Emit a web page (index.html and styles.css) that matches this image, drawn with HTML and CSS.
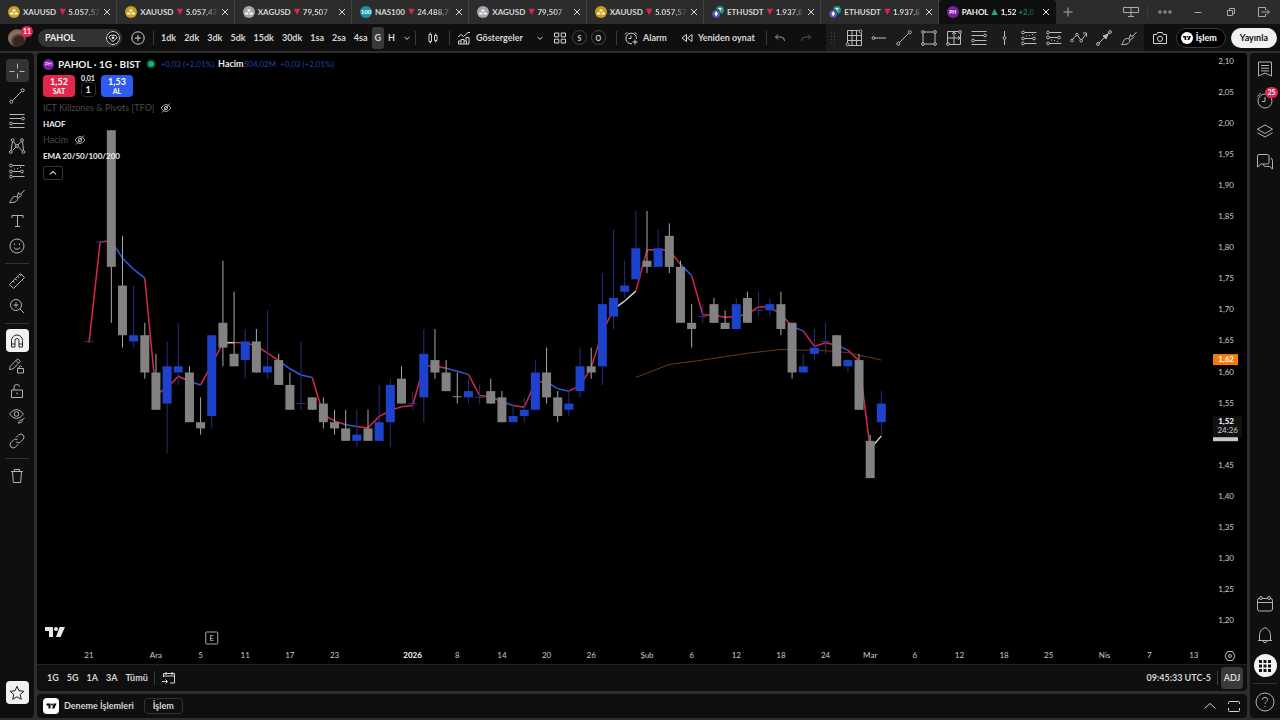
FILE: index.html
```html
<!DOCTYPE html>
<html lang="tr">
<head>
    <meta charset="UTF-8">
    <meta name="viewport" content="width=device-width, initial-scale=1.0">
    <title>PAHOL 1,52</title>
    <link rel="stylesheet" href="styles.css">
</head>
<body>
    <svg class="sprite" aria-hidden="true">
        <symbol id="gold" viewBox="0 0 12 12"><circle cx="6" cy="6" r="6" fill="#c9a01c"/><path d="M4.4 5.4l.5-2h2.2l.5 2zM1.9 8.4l.5-2h2.7l.5 2zM6.4 8.4l.5-2h2.7l.5 2z" fill="#fff"/></symbol>
        <symbol id="silver" viewBox="0 0 12 12"><circle cx="6" cy="6" r="6" fill="#a5a6ab"/><path d="M4.4 5.4l.5-2h2.2l.5 2zM1.9 8.4l.5-2h2.7l.5 2zM6.4 8.4l.5-2h2.7l.5 2z" fill="#fff"/></symbol>
        <symbol id="eth" viewBox="0 0 12 12"><circle cx="8" cy="4" r="4" fill="#1f9d83"/><path d="M6.3 2.6h3.4M8 2.6v3.6" stroke="#fff" fill="none"/><circle cx="4.4" cy="7.6" r="4.4" fill="#2d2d2d"/><circle cx="4.2" cy="7.8" r="3.9" fill="#4a5bb8"/><path d="M4.2 5l1.7 2.8-1.7 2.6-1.7-2.6z" fill="#fff"/></symbol>
        <symbol id="tv" viewBox="0 0 20 12"><path d="M0 1h8v10H4V5H0zM14.6 1H20l-4.400 10H11z"/><circle cx="11" cy="3" r="2"/></symbol>
        <symbol id="close" viewBox="0 0 12 12"><path d="M3 3l6 6M9 3l-6 6"/></symbol>
        <symbol id="plus" viewBox="0 0 12 12"><path d="M6 1.5v9M1.5 6h9"/></symbol>
        <symbol id="layout" viewBox="0 0 16 12"><path d="M.5 1.500h15v5H.5zM8 1.500v9M5 10.500h6"/></symbol>
        <symbol id="dots" viewBox="0 0 16 12"><circle cx="3" cy="6" r="1.200"/><circle cx="8" cy="6" r="1.200"/><circle cx="13" cy="6" r="1.200"/></symbol>
        <symbol id="minimize" viewBox="0 0 12 12"><path d="M2.500 6.500h7"/></symbol>
        <symbol id="restore" viewBox="0 0 12 12"><path d="M2.500 4.500h5v5h-5zM4.500 4.500v-2h5v5h-2"/></symbol>
        <symbol id="exit" viewBox="0 0 14 12"><path d="M8.500 4V1.500h-7v9h7V8M4.500 6h8M10 3.500L12.500 6 10 8.500"/></symbol>
        <symbol id="gem" viewBox="0 0 14 14"><circle cx="7" cy="7" r="6.500"/><path d="M4.500 4.200h5l1.700 2.400L7 10.600 2.800 6.600z"/><circle cx="7" cy="6.800" r="1" fill="currentColor"/></symbol>
        <symbol id="addc" viewBox="0 0 14 14"><circle cx="7" cy="7" r="6.200"/><path d="M7 3.800v6.400M3.800 7h6.400"/></symbol>
        <symbol id="down" viewBox="0 0 8 8"><path d="M1.500 3L4 5.300 6.500 3"/></symbol>
        <symbol id="up" viewBox="0 0 14 14"><path d="M1.500 9.500L7 4.500l5.500 5"/></symbol>
        <symbol id="candles" viewBox="0 0 12 14"><path d="M2 3.500h2.500v7H2zM7.500 4.500H10v5H7.500zM3.250 1.500v2M3.250 10.500v2M8.750 2.500v2M8.750 9.500v2"/></symbol>
        <symbol id="indicators" viewBox="0 0 14 14"><path d="M1 6l3-2.500 2.500 2L11 1.500h2M1.500 13V10H4V8.500h3V10h2V6.500h3V13zM4 10v3M7 10v3M9.500 10v3"/></symbol>
        <symbol id="grid4" viewBox="0 0 14 14"><path d="M1.500 2h4.300v3.800H1.500zM8.200 2h4.300v3.800H8.200zM1.500 8.200h4.300V12H1.500zM8.200 8.200h4.300V12H8.200z"/></symbol>
        <symbol id="alarm" viewBox="0 0 14 14"><path d="M8 12.700a5.300 5.300 0 1 1 4.500-5M1 3.500l2.300-2.300M10.700 1.200L13 3.500M7 4.500v3H4.500M11 8.500v5M8.500 11h5"/></symbol>
        <symbol id="replay" viewBox="0 0 12 12"><path d="M5.500 2.500v7L1 6zM11 2.500v7L6.500 6z"/></symbol>
        <symbol id="undo" viewBox="0 0 12 12"><path d="M4 2.500L1.500 5 4 7.500M1.500 5H7q3.500 0 3.500 4"/></symbol>
        <symbol id="redo" viewBox="0 0 12 12"><path d="M8 2.500L10.500 5 8 7.500M10.500 5H5Q1.500 5 1.500 9"/></symbol>
        <symbol id="handle" viewBox="0 0 8 14"><path d="M2 2h1M5 2h1M2 5.300h1M5 5.300h1M2 8.600h1M5 8.600h1M2 12h1M5 12h1"/></symbol>
        <symbol id="d-grid" viewBox="0 0 18 18"><path d="M2.500 1.500h11M16.500 4v12.500H4M2.500 1.500v12.500M7 1.500v15M11.500 1.500v15M2.500 6.500h14M2.500 11.500h14"/><circle cx="15.500" cy="2.300" r="1.400"/><circle cx="2.500" cy="15.500" r="1.400"/></symbol>
        <symbol id="d-ray" viewBox="0 0 18 18"><circle cx="3.500" cy="9" r="1.400"/><path d="M5 9h11"/></symbol>
        <symbol id="d-line" viewBox="0 0 18 18"><circle cx="3.300" cy="14.700" r="1.500"/><circle cx="14.700" cy="3.300" r="1.500"/><path d="M4.400 13.600l9.200-9.200"/></symbol>
        <symbol id="d-rect" viewBox="0 0 18 18"><path d="M4.500 3h9M4.500 15h9M3 4.500v9M15 4.500v9"/><circle cx="3" cy="3" r="1.400"/><circle cx="15" cy="3" r="1.400"/><circle cx="3" cy="15" r="1.400"/><circle cx="15" cy="15" r="1.400"/></symbol>
        <symbol id="d-range" viewBox="0 0 18 18"><path d="M2.500 2.500h11M15.500 4.500v11H5M2.500 2.500v11.500M9 3v12M3 9h12M7 5l2-2 2 2M13 7l2 2-2 2"/><circle cx="15" cy="3" r="1.400"/><circle cx="3" cy="15" r="1.400"/></symbol>
        <symbol id="d-fib" viewBox="0 0 18 18"><path d="M1.500 2.500h15M1.500 6.500h12M4.500 11.500h12M1.500 15.500h15"/><circle cx="15" cy="6.500" r="1.400"/><circle cx="3" cy="11.500" r="1.400"/></symbol>
        <symbol id="d-vline" viewBox="0 0 18 18"><circle cx="9.500" cy="9" r="1.400"/><path d="M9.500 2v5.500M9.500 10.500V16"/></symbol>
        <symbol id="d-long" viewBox="0 0 18 18"><path d="M4.500 3.500h12M4.500 9.500h8M4.500 14.500h12M6 7h1M9 6.500h1M12 5.500h1"/><circle cx="3" cy="3.500" r="1.400"/><circle cx="3" cy="9.500" r="1.400"/><circle cx="14" cy="9.500" r="1.400"/><circle cx="3" cy="14.500" r="1.400"/></symbol>
        <symbol id="d-short" viewBox="0 0 18 18"><path d="M4.500 3.500h12M4.500 8.500h8M4.500 14.500h12M6 11h1M9 11.500h1M12 12.500h1"/><circle cx="3" cy="3.500" r="1.400"/><circle cx="3" cy="8.500" r="1.400"/><circle cx="14" cy="8.500" r="1.400"/><circle cx="3" cy="14.500" r="1.400"/></symbol>
        <symbol id="d-path" viewBox="0 0 18 18"><path d="M2.500 10.500L6 6.500M8 6.800l2.500 4M12 10.500l4.500-6M13 4h3.500v3.500"/><circle cx="2" cy="11.500" r="1.300"/><circle cx="7" cy="5.600" r="1.300"/><circle cx="11.200" cy="11.700" r="1.300"/></symbol>
        <symbol id="d-arrow" viewBox="0 0 18 18"><circle cx="3" cy="15" r="1.400"/><circle cx="15" cy="3" r="1.400"/><path d="M4 14l10-10"/><path d="M13 5l-5 2 3 3z" fill="currentColor"/></symbol>
        <symbol id="d-brush" viewBox="0 0 18 18"><path d="M1.500 15.500c2-1 1.500-5 4.500-6 2.500-.7 4.500 1.500 3.300 3.700-1.300 2.300-5 2.600-7.800 2.300zM9 10l1.500-4.500M10.500 5.500q.5 3 2.500 1.500l3.500-4M9.800 11.500l4-3.500"/></symbol>
        <symbol id="camera" viewBox="0 0 16 14"><path d="M1.500 3.500h3l1.200-2h4.600l1.200 2h3v9h-13z"/><circle cx="8" cy="7.800" r="2.600"/></symbol>
        <symbol id="cross" viewBox="0 0 18 18"><path d="M9.500 1.500v5M9.500 11.500v5M1.500 9.500h5M11.500 9.500h5"/></symbol>
        <symbol id="pattern" viewBox="0 0 18 18"><path d="M3 13.500l1.500-9M5.500 4.500L8 8M10 8l3-3.500M14.500 4.500l1 9M4.500 13.500L8 10M10.500 10l4 4"/><circle cx="2.800" cy="15" r="1.400"/><circle cx="4.700" cy="3.200" r="1.400"/><circle cx="9" cy="9" r="1.400"/><circle cx="14" cy="3.200" r="1.400"/><circle cx="15.500" cy="15" r="1.400"/></symbol>
        <symbol id="text" viewBox="0 0 18 18"><path d="M4 6V3.500h11V6M9.500 3.500v11M7 14.500h5"/></symbol>
        <symbol id="smile" viewBox="0 0 18 18"><circle cx="9" cy="9" r="7"/><path d="M5.800 10.500q3.200 3.500 6.400 0M6.500 6.500v1.500M11.500 6.500v1.500"/></symbol>
        <symbol id="ruler" viewBox="0 0 18 18"><path d="M1.500 12.500l11-11 4 4-11 11zM5 9l1.500 1.500M7.300 6.700L9 8.400M9.600 4.400l1.600 1.600M12 2.500l1.300 1.500"/></symbol>
        <symbol id="zoomin" viewBox="0 0 18 18"><circle cx="8" cy="8" r="5.500"/><path d="M12 12l4 4M8 5.500v5M5.500 8h5"/></symbol>
        <symbol id="magnet" viewBox="0 0 18 18"><path d="M3.500 15V8.500a5.500 5.500 0 0 1 11 0V15h-3.500V8.500a2 2 0 0 0-4 0V15zM3.500 12H7M11 12h3.500"/></symbol>
        <symbol id="penlock" viewBox="0 0 18 18"><path d="M1.500 12.500l.7-3.200 7.500-7.500 2.600 2.600L4.800 12zM8 3.500L10.500 6M9.500 11.500h6v4.500h-6zM11 11.500V9.800q1.500-2 3 0"/></symbol>
        <symbol id="lock" viewBox="0 0 18 18"><path d="M3.500 8h11v7.500h-11zM6 8V5q0-2.500 2.700-2.500T11.500 4.500M9 10.500v2"/></symbol>
        <symbol id="eyebrush" viewBox="0 0 18 18"><path d="M1.500 7Q5 2.500 8.500 2.500T15.500 7Q12 11.500 8.500 11.500T1.500 7zM10 16c1.500-.5 1-3 3-3s2 3-3 3zM14 13l2.500-2"/><circle cx="8.500" cy="7" r="2.300"/></symbol>
        <symbol id="link" viewBox="0 0 18 18"><path d="M8 5.500l2.700-2.700a3.200 3.200 0 0 1 4.500 4.500l-2.900 2.900q-2 1.500-4 0M10 12.500l-2.700 2.700a3.200 3.200 0 0 1-4.500-4.500l2.900-2.900q2-1.500 4 0"/></symbol>
        <symbol id="trash" viewBox="0 0 18 18"><path d="M3 4.500h12M6.500 4.500v-2h5v2M4.500 4.500l.8 11h7.400l.8-11"/></symbol>
        <symbol id="star" viewBox="0 0 18 18"><path d="M9 2.300l2 4.500 4.900.5-3.700 3.200 1.100 4.800L9 12.800l-4.300 2.500 1.100-4.800-3.700-3.200 4.900-.5z"/></symbol>
        <symbol id="watch" viewBox="0 0 18 18"><path d="M2.500 2h13v14L9 13l-6.500 3zM5 5.500h8M5 8.200h8M5 10.900h8"/></symbol>
        <symbol id="clock" viewBox="0 0 18 18"><circle cx="9" cy="10" r="7"/><path d="M9 6v4.500H6M1.500 5.500l3-3.500"/></symbol>
        <symbol id="layers" viewBox="0 0 18 18"><path d="M9 3l7.500 4.200L9 11.500 1.500 7.200zM1.500 10.700L9 15l7.500-4.300"/></symbol>
        <symbol id="chat" viewBox="0 0 18 18"><path d="M3 1.500h8.500q1.500 0 1.500 1.500v6.500q0 1.500-1.500 1.500H5l-3.500 3V3q0-1.500 1.500-1.500zM14.500 5.500q2 0 2 2V16l-3-2.500H9.500q-2 0-2-2"/></symbol>
        <symbol id="calendar" viewBox="0 0 18 18"><path d="M3.500 3.500q-2 0-2 2V14q0 2 2 2h11q2 0 2-2V5.500q0-2-2-2M6.500 3.500h5M1.500 7.500h15"/><circle cx="5" cy="3" r="1.500"/><circle cx="13" cy="3" r="1.500"/></symbol>
        <symbol id="bell" viewBox="0 0 18 18"><path d="M2 14.500h14M3.500 14.500V8.500C4 5 6 3 9 1.500 12 3 14 5 14.500 8.500v6M6.500 14.500q2.500 4.500 5 0"/></symbol>
        <symbol id="apps" viewBox="0 0 18 18"><path d="M3 3h3v3H3zM7.500 3h3v3h-3zM12 3h3v3h-3zM3 7.500h3v3H3zM7.500 7.500h3v3h-3zM12 7.500h3v3h-3zM3 12h3v3H3zM7.500 12h3v3h-3zM12 12h3v3h-3z" fill="currentColor" stroke="none"/></symbol>
        <symbol id="help" viewBox="0 0 20 20"><circle cx="10" cy="10" r="9"/><path d="M7.300 7.800q.2-2.500 2.700-2.500t2.600 2.300c0 2-2.600 2-2.600 4.200M10 13.700v1.300"/></symbol>
        <symbol id="eyeoff" viewBox="0 0 12 12"><path d="M1 6q2.500-3.500 5-3.500T11 6Q8.500 9.500 6 9.500T1 6zM2 10.500l8-9"/><circle cx="6" cy="6" r="1.700"/></symbol>
        <symbol id="goto" viewBox="0 0 14 14"><path d="M1.500 6V2.500h11v9.500H8M4 1v3M10 1v3M1.500 5h11M0 10.500h5.500M3.500 8.500l2 2-2 2"/></symbol>
        <symbol id="maximize" viewBox="0 0 14 14"><path d="M1.500 5V3.500q0-1 1-1h9q1 0 1 1V5M1.500 9v2.500q0 1 1 1h9q1 0 1-1V9"/></symbol>
        <symbol id="hexagon" viewBox="0 0 12 12"><path d="M3.500 1.500h5L11 6l-2.500 4.500h-5L1 6z"/><circle cx="6" cy="6" r="1.500"/></symbol>
    </svg>

    <div class="app">
        <header class="tabstrip">
            <nav class="tabs" id="tabs"></nav>
            <div class="window-tools">
                <button class="win" aria-label="Yeni sekme"><svg class="i12"><use href="#plus"/></svg></button>
                <span class="fill"></span>
                <button class="win" aria-label="Pencereler"><svg class="i16"><use href="#layout"/></svg></button>
                <span class="vsep tall"></span>
                <button class="win wide" aria-label="Menü"><svg class="i16"><use href="#dots"/></svg></button>
                <button class="win wide" aria-label="Küçült"><svg class="i12"><use href="#minimize"/></svg></button>
                <button class="win wide" aria-label="Geri yükle"><svg class="i12"><use href="#restore"/></svg></button>
                <button class="win wide" aria-label="Çıkış"><svg class="i14"><use href="#exit"/></svg></button>
            </div>
        </header>

        <div class="toolbar">
            <button class="avatar" aria-label="Hesap"><span class="badge">11</span></button>
            <button class="symbol-search">PAHOL <svg class="i14"><use href="#gem"/></svg></button>
            <button class="tool round" aria-label="Karşılaştır"><svg class="i14"><use href="#addc"/></svg></button>
            <span class="vsep"></span>
            <div class="frames">
                <button>1dk</button><button>2dk</button><button>3dk</button><button>5dk</button><button>15dk</button><button>30dk</button><button>1sa</button><button>2sa</button><button>4sa</button><button class="active">G</button><button>H</button>
            </div>
            <button class="tool slim" aria-label="Zaman aralıkları"><svg class="i8"><use href="#down"/></svg></button>
            <span class="vsep"></span>
            <button class="tool candle" aria-label="Mumlar"><svg class="i14"><use href="#candles"/></svg></button>
            <span class="vsep"></span>
            <button class="tool label"><svg class="i14"><use href="#indicators"/></svg>Göstergeler</button>
            <button class="tool" aria-label="Favoriler"><svg class="i8"><use href="#down"/></svg></button>
            <button class="tool" aria-label="Şablonlar"><svg class="i14"><use href="#grid4"/></svg></button>
            <button class="letter">S</button>
            <button class="letter">O</button>
            <span class="vsep"></span>
            <button class="tool label"><svg class="i14"><use href="#alarm"/></svg>Alarm</button>
            <button class="tool label"><svg class="i12"><use href="#replay"/></svg>Yeniden oynat</button>
            <span class="vsep"></span>
            <button class="tool dim" aria-label="Geri al"><svg class="i12"><use href="#undo"/></svg></button>
            <button class="tool dim faint" aria-label="Yinele"><svg class="i12"><use href="#redo"/></svg></button>
            <div class="drawbar">
                <span class="handle"><svg><use href="#handle"/></svg></span>
                <button aria-label="Izgara"><svg class="i18"><use href="#d-grid"/></svg></button>
                <button aria-label="Yatay ışın"><svg class="i18"><use href="#d-ray"/></svg></button>
                <button aria-label="Trend çizgisi"><svg class="i18"><use href="#d-line"/></svg></button>
                <button aria-label="Dikdörtgen"><svg class="i18"><use href="#d-rect"/></svg></button>
                <button aria-label="Aralık"><svg class="i18"><use href="#d-range"/></svg></button>
                <button aria-label="Fibonacci"><svg class="i18"><use href="#d-fib"/></svg></button>
                <button aria-label="Dikey çizgi"><svg class="i18"><use href="#d-vline"/></svg></button>
                <button aria-label="Uzun pozisyon"><svg class="i18"><use href="#d-long"/></svg></button>
                <button aria-label="Kısa pozisyon"><svg class="i18"><use href="#d-short"/></svg></button>
                <button aria-label="Yol"><svg class="i18"><use href="#d-path"/></svg></button>
                <button aria-label="Ok"><svg class="i18"><use href="#d-arrow"/></svg></button>
                <button aria-label="Fırça"><svg class="i18"><use href="#d-brush"/></svg></button>
            </div>
            <button class="tool camera" aria-label="Anlık görüntü"><svg class="i16"><use href="#camera"/></svg></button>
            <button class="pill dark"><span class="tv-dot"><svg><use href="#tv"/></svg></span>İşlem</button>
            <button class="pill light">Yayınla</button>
        </div>

        <div class="workspace">
            <aside class="side left">
                <button class="on" aria-label="Artı imleç"><svg class="i18"><use href="#cross"/></svg></button>
                <button aria-label="Trend"><svg class="i18"><use href="#d-line"/></svg></button>
                <button aria-label="Fib"><svg class="i18"><use href="#d-fib"/></svg></button>
                <button aria-label="Formasyon"><svg class="i18"><use href="#pattern"/></svg></button>
                <button aria-label="Tahmin"><svg class="i18"><use href="#d-long"/></svg></button>
                <button aria-label="Fırça"><svg class="i18"><use href="#d-brush"/></svg></button>
                <button aria-label="Metin"><svg class="i18"><use href="#text"/></svg></button>
                <button aria-label="Simge"><svg class="i18"><use href="#smile"/></svg></button>
                <hr>
                <button aria-label="Ölç"><svg class="i18"><use href="#ruler"/></svg></button>
                <button aria-label="Yakınlaştır"><svg class="i18"><use href="#zoomin"/></svg></button>
                <hr>
                <button class="white" aria-label="Mıknatıs"><svg class="i18"><use href="#magnet"/></svg></button>
                <button aria-label="Çizim modu"><svg class="i18"><use href="#penlock"/></svg></button>
                <button aria-label="Kilitle"><svg class="i18"><use href="#lock"/></svg></button>
                <button aria-label="Gizle"><svg class="i18"><use href="#eyebrush"/></svg></button>
                <button aria-label="Bağla"><svg class="i18"><use href="#link"/></svg></button>
                <hr>
                <button aria-label="Sil"><svg class="i18"><use href="#trash"/></svg></button>
                <span class="fill"></span>
                <button class="white" aria-label="Favori"><svg class="i18"><use href="#star"/></svg></button>
            </aside>

            <main class="center">
                <section class="panel chart-panel">
                    <div class="chart">
                        <svg class="plot" id="plot" role="img" aria-label="PAHOL fiyat grafiği"></svg>
                        <div class="legend">
                            <div class="title-row">
                                <span class="ph">PH</span>
                                <span class="title">PAHOL · 1G · BIST</span>
                                <span class="live"></span>
                                <span class="blue">+0,03 (+2,01%)</span>
                                <span><b>Hacim</b><span class="blue">504,02M</span></span>
                                <span class="blue">+0,03 (+2,01%)</span>
                            </div>
                            <div class="trade-row">
                                <button class="sell">1,52<small>SAT</small></button>
                                <div class="spread"><span>0,01</span><button>1</button></div>
                                <button class="buy">1,53<small>AL</small></button>
                            </div>
                            <div class="study off">ICT Killzones &amp; Pivots [TFO] <svg class="i12"><use href="#eyeoff"/></svg></div>
                            <div class="study">HAOF</div>
                            <div class="study off">Hacim <svg class="i12"><use href="#eyeoff"/></svg></div>
                            <div class="study">EMA 20/50/100/200</div>
                            <button class="collapse" aria-label="Daralt"><svg class="i8"><use href="#up"/></svg></button>
                        </div>
                        <svg class="watermark"><use href="#tv"/></svg>
                        <button class="axis-settings" aria-label="Ölçek ayarları"><svg class="i12"><use href="#hexagon"/></svg></button>
                    </div>
                    <div class="rangebar">
                        <button>1G</button><button>5G</button><button>1A</button><button>3A</button><button>Tümü</button>
                        <span class="vsep"></span>
                        <button aria-label="Tarihe git"><svg class="i14"><use href="#goto"/></svg></button>
                        <span class="fill"></span>
                        <button>09:45:33 UTC-5</button>
                        <span class="vsep"></span>
                        <button class="adj">ADJ</button>
                    </div>
                </section>
                <section class="panel tradebar">
                    <span class="tv-box"><svg><use href="#tv"/></svg></span>
                    <span>Deneme İşlemleri</span>
                    <button class="outline">İşlem</button>
                    <span class="fill"></span>
                    <button aria-label="Aç"><svg class="i14"><use href="#up"/></svg></button>
                    <button aria-label="Büyüt"><svg class="i14"><use href="#maximize"/></svg></button>
                </section>
            </main>

            <aside class="side right">
                <button aria-label="İzleme listesi"><svg class="i18"><use href="#watch"/></svg></button>
                <button aria-label="Alarmlar"><svg class="i18"><use href="#clock"/></svg><span class="badge">25</span></button>
                <button aria-label="Nesne ağacı"><svg class="i18"><use href="#layers"/></svg></button>
                <button aria-label="Sohbet"><svg class="i18"><use href="#chat"/></svg></button>
                <span class="fill"></span>
                <button aria-label="Takvim"><svg class="i18"><use href="#calendar"/></svg></button>
                <button aria-label="Bildirimler"><svg class="i18"><use href="#bell"/></svg></button>
                <button class="apps" aria-label="Uygulamalar"><svg class="i18"><use href="#apps"/></svg></button>
                <hr>
                <button aria-label="Yardım"><svg class="i20"><use href="#help"/></svg></button>
            </aside>
        </div>
    </div>
    <script src="chart.js"></script>
</body>
</html>
```
FILE: styles.css
```css
* {
    box-sizing: border-box;
}
body {
    margin: 0;
    background: #2e2e2e;
    color: #d6d6d6;
    font-family: Lato, sans-serif;
    font-size: 9px;
    line-height: 12px;
    font-weight: 700;
}
button {
    font: inherit;
    color: inherit;
    background: none;
    border: 0;
    padding: 0;
    margin: 0;
    display: flex;
    align-items: center;
    justify-content: center;
    white-space: nowrap;
    cursor: pointer;
}
svg {
    display: block;
    flex: none;
    fill: none;
    stroke: currentColor;
    stroke-width: 1;
}
.sprite {
    position: absolute;
    width: 0;
    height: 0;
}
.i8 { width: 8px; height: 8px; }
.i12 { width: 12px; height: 12px; }
.i14 { width: 14px; height: 14px; }
.i16 { width: 16px; height: 14px; }
.i18 { width: 18px; height: 18px; }
.i20 { width: 20px; height: 20px; }
.fill {
    flex: 1;
}
.vsep {
    width: 1px;
    height: 14px;
    background: #3a3a3a;
    flex: none;
}
.app {
    height: 100vh;
    display: flex;
    flex-direction: column;
}

/* tabs */
.tabstrip {
    height: 24px;
    display: flex;
    flex: none;
    background: #2c2c2c;
}
.tabs {
    flex: 1;
    display: flex;
    min-width: 0;
}
.tab {
    flex: 1 1 0;
    min-width: 0;
    display: flex;
    align-items: center;
    gap: 3px;
    padding: 0 3px 0 8px;
    border-right: 1px solid #424242;
    color: #d6d6d6;
    font-size: 8px;
    text-decoration: none;
    white-space: nowrap;
}
.tab svg {
    stroke: none;
}
.tab .arrow {
    color: #d9264c;
    font-family: "DejaVu Sans", sans-serif;
    font-size: 8px;
}
.tab .arrow.rise,
.tab .gain {
    color: #22ab84;
}
.tab .price {
    flex: 1;
    min-width: 0;
    mask-image: linear-gradient(90deg, #000 50%, transparent);
}
.tab .x {
    stroke: currentColor;
    margin-left: -3px;
}
.tab.active {
    background: #0f0f0f;
    border-color: #0f0f0f;
    border-radius: 4px 4px 0 0;
    color: #eee;
}
.coin {
    width: 12px;
    height: 12px;
    border-radius: 50%;
    flex: none;
    background: #1798a8;
    color: #fff;
    font-size: 6px;
    line-height: 12px;
    text-align: center;
}
.coin.purple {
    background: #7b1fa2;
    font-size: 5px;
}
.window-tools {
    flex: none;
    width: 224px;
    display: flex;
    align-items: center;
    color: #aaa;
}
.win {
    width: 23px;
    height: 24px;
}
.win.wide {
    width: 33px;
}
.win .i16 {
    height: 12px;
}
.vsep.tall {
    margin-left: 5px;
}

/* toolbar */
.toolbar {
    height: 27px;
    flex: none;
    display: flex;
    align-items: center;
    background: #0f0f0f;
    padding: 0 3px 0 8px;
}
.avatar {
    width: 18px;
    height: 18px;
    border-radius: 50%;
    position: relative;
    background: radial-gradient(circle at 60% 70%, #3a2420 30%, #8f7468 55%, #57423b);
    flex: none;
}
.badge {
    position: absolute;
    top: -3px;
    right: -7px;
    background: #e0244e;
    color: #fff;
    font-size: 7px;
    line-height: 11px;
    padding: 0 2px;
    border-radius: 6px;
}
.symbol-search {
    width: 84px;
    height: 18px;
    margin-left: 12px;
    padding: 0 2px 0 7px;
    border-radius: 9px;
    background: #333;
    color: #eee;
    justify-content: space-between;
}
.symbol-search svg {
    border-radius: 50%;
    background: #0f0f0f;
}
.tool {
    height: 22px;
    width: 20px;
    flex: none;
}
.tool.round {
    width: 31px;
}
.frames {
    display: flex;
    margin-left: 3px;
}
.frames button {
    height: 22px;
    padding: 0 4px;
}
.frames .active {
    background: #3a3a3a;
    border-radius: 3px;
    padding: 0 3px;
}
.tool.slim {
    width: 16px;
}
.tool.candle {
    width: 33px;
}
.tool.label {
    width: auto;
    padding: 0 7px;
    gap: 5px;
}
.tool.label + .vsep {
    margin-left: 4px;
}
.letter {
    width: 15px;
    height: 15px;
    border: 1px solid #444;
    border-radius: 50%;
    font-size: 7px;
    margin: 0 2px;
    flex: none;
}
.letter + .vsep {
    margin-left: 8px;
}
.dim {
    width: 26px;
    color: #999;
}
.faint {
    color: #555;
}
.drawbar {
    margin-left: auto;
    display: flex;
    align-items: center;
    height: 27px;
    background: #1b1b1b;
    padding-right: 2px;
    color: #bbb;
}
.drawbar button {
    width: 25px;
    height: 24px;
}
.handle {
    width: 16px;
    padding-left: 3px;
    color: #555;
}
.handle svg {
    width: 8px;
    height: 14px;
}
.camera {
    width: 32px;
}
.pill {
    height: 20px;
    border-radius: 10px;
    gap: 3px;
    flex: none;
}
.pill.dark {
    border: 1px solid #3a3a3a;
    background: #000;
    color: #fff;
    padding: 0 8px 0 4px;
    margin-right: 5px;
}
.pill.light {
    background: #f0f0f0;
    color: #111;
    padding: 0 9px;
}
.tv-dot,
.tv-box {
    background: #fff;
    border-radius: 50%;
    width: 12px;
    height: 12px;
    display: flex;
    align-items: center;
    justify-content: center;
    color: #000;
}
.tv-dot svg,
.tv-box svg {
    width: 8px;
    height: 6px;
    fill: currentColor;
    stroke: none;
}

/* side bars */
.workspace {
    flex: 1;
    min-height: 0;
    display: flex;
    gap: 3px;
    padding: 2px 0;
}
.side {
    display: flex;
    flex-direction: column;
    align-items: center;
    background: #0f0f0f;
    color: #b4b4b4;
    flex: none;
}
.side hr {
    width: 24px;
    height: 1px;
    border: 0;
    background: #333;
    margin: 4px 0 3px;
    flex: none;
}
.side button {
    position: relative;
    border-radius: 4px;
    flex: none;
}
.left {
    width: 34px;
    padding: 6px 0 14px;
    gap: 2px;
    border-radius: 0 4px 4px 0;
}
.left button {
    width: 23px;
    height: 23px;
}
.left .on {
    background: #333;
}
.left .white {
    background: #f2f2f2;
    color: #222;
}
.right {
    width: 30px;
    padding: 2px 0 3px;
    gap: 4px;
    border-radius: 4px 0 0 4px;
}
.right button {
    width: 27px;
    height: 27px;
}
.right hr {
    margin: 0;
}
.right .badge {
    top: 1px;
    right: 1px;
}
.right .apps {
    width: 23px;
    height: 23px;
    margin: 2px 0;
    border-radius: 50%;
    background: #f2f2f2;
    color: #111;
}

/* chart */
.center {
    flex: 1;
    min-width: 0;
    display: flex;
    flex-direction: column;
    gap: 3px;
}
.panel {
    background: #0f0f0f;
    border-radius: 4px;
    overflow: hidden;
}
.chart-panel {
    flex: 1;
    min-height: 0;
    display: flex;
    flex-direction: column;
}
.chart {
    flex: 1;
    min-height: 0;
    position: relative;
    background: #000;
    border-bottom: 1px solid #222;
}
.plot {
    width: 100%;
    height: 100%;
    stroke: none;
}
.plot text {
    font-size: 8px;
    font-weight: 400;
    fill: #cacaca;
}
.plot .strong {
    font-weight: 700;
    fill: #fff;
}
.legend {
    position: absolute;
    top: 4px;
    left: 6px;
    display: flex;
    flex-direction: column;
    align-items: flex-start;
}
.title-row {
    display: flex;
    align-items: center;
    height: 14px;
    gap: 4px;
    font-weight: 400;
}
.title-row b {
    color: #eee;
}
.ph {
    width: 11px;
    height: 11px;
    border-radius: 50%;
    background: #7b1fa2;
    color: #fff;
    font-size: 5px;
    line-height: 11px;
    text-align: center;
}
.title {
    font-size: 10px;
    font-weight: 700;
    color: #eee;
}
.live {
    width: 6px;
    height: 6px;
    margin: 0 3px;
    border-radius: 50%;
    background: #22ab84;
    box-shadow: 0 0 0 2px #0b3328;
}
.blue {
    color: #2540b0;
    font-size: 8px;
}
.trade-row {
    display: flex;
    gap: 5px;
    margin: 4px 0 3px;
}
.trade-row > button {
    width: 32px;
    height: 22px;
    border-radius: 4px;
    flex-direction: column;
    color: #fff;
    line-height: 10px;
}
.trade-row small {
    font-size: 7px;
    line-height: 9px;
}
.sell {
    background: #e5264c;
}
.buy {
    background: #2f5bf5;
}
.spread {
    display: flex;
    flex-direction: column;
    align-items: center;
    width: 16px;
    font-size: 7px;
    line-height: 7px;
    color: #eee;
}
.spread button {
    width: 15px;
    height: 15px;
    border: 1px solid #2c2c2c;
    border-radius: 4px;
    font-size: 9px;
}
.study {
    height: 16px;
    display: flex;
    align-items: center;
    gap: 6px;
    color: #eee;
    font-size: 8px;
}
.study.off {
    color: #4c4c4c;
    font-size: 9px;
    font-weight: 400;
}
.study svg {
    color: #aaa;
}
.collapse {
    width: 20px;
    height: 14px;
    margin-top: 2px;
    border: 1px solid #333;
    border-radius: 2px;
}
.collapse svg {
    stroke-width: 2;
}
.watermark {
    position: absolute;
    left: 8px;
    bottom: 26px;
    width: 20px;
    height: 12px;
    fill: #e8e8e8;
    stroke: none;
}
.axis-settings {
    position: absolute;
    right: 11px;
    bottom: 2px;
    color: #bbb;
}
.rangebar,
.tradebar {
    height: 26px;
    flex: none;
    display: flex;
    align-items: center;
    padding: 0 4px 0 6px;
}
.rangebar button {
    padding: 0 4px;
}
.rangebar .vsep {
    margin: 0 3px 0 2px;
}
.rangebar .adj {
    width: 22px;
    height: 22px;
    padding: 0;
    background: #3a3a3a;
    border-radius: 4px;
}
.tradebar {
    height: 24px;
    gap: 5px;
}
.tradebar > button {
    width: 19px;
    height: 16px;
}
.tradebar .tv-box {
    width: 16px;
    height: 16px;
    border-radius: 4px;
}
.tv-box svg {
    width: 11px;
}
.tradebar .outline {
    width: 39px;
    margin-left: 5px;
    border: 1px solid #333;
    border-radius: 4px;
}
```
FILE: chart.js
```js
// tabs: icon, symbol, price, change
const tabs = [
    ['gold', 'XAUUSD', '5.057,57'],
    ['gold', 'XAUUSD', '5.057,47'],
    ['silver', 'XAGUSD', '79,507'],
    ['nas', 'NAS100', '24.488,7'],
    ['silver', 'XAGUSD', '79,507'],
    ['gold', 'XAUUSD', '5.057,57'],
    ['eth', 'ETHUSDT', '1.937,8'],
    ['eth', 'ETHUSDT', '1.937,8'],
    ['ph', 'PAHOL', '1,52', '+2,0']
];

function tabIcon(name) {
    if (name === 'nas') return '<span class="coin">100</span>';
    if (name === 'ph') return '<span class="coin purple">PH</span>';
    return `<svg class="i12"><use href="#${name}"/></svg>`;
}

document.getElementById('tabs').innerHTML = tabs.map(([icon, name, price, gain]) => `
    <a class="tab${gain ? ' active' : ''}" href="#">${tabIcon(icon)}<span>${name}</span>
    <span class="arrow${gain ? ' rise' : ''}">${gain ? '▲' : '▼'}</span>
    <span class="price">${price}${gain ? ` <span class="gain">${gain}</span>` : ''}</span>
    <svg class="i12 x"><use href="#close"/></svg></a>`).join('');

// open, high, low, close in kuruş
const candles = [
    [165, 165, 165, 165], [181, 181, 181, 181], [199, 199, 168, 177], [174, 182, 164, 166],
    [165, 174, 164, 166], [166, 168, 159, 160], [160, 163, 154, 154], [155, 165, 147, 161],
    [160, 168, 158, 161], [160, 161, 152, 152], [152, 156, 150, 151], [153, 166, 151, 166],
    [168, 178, 161, 164], [163, 173, 161, 161], [162, 167, 159, 165], [165, 167, 160, 160],
    [160, 170, 159, 161], [162, 163, 158, 158], [158, 160, 154, 154], [155, 165, 154, 155],
    [156, 156, 154, 154], [155, 156, 151, 152], [152, 154, 150, 151], [151, 154, 149, 149],
    [149, 154, 148, 150], [151, 154, 149, 149], [149, 158, 149, 152], [152, 159, 148, 158],
    [159, 161, 155, 155], [155, 157, 154, 155], [156, 167, 152, 163], [162, 167, 159, 160],
    [160, 162, 157, 157], [156.1, 160, 155, 156], [156, 159, 155, 157], [156, 158, 155, 156],
    [157, 159, 155, 155], [156, 157, 152, 152], [152, 155, 152, 153], [153, 156, 152, 154],
    [154, 162, 154, 160], [160, 164, 155, 156], [156, 157, 152, 153], [154, 157, 153, 155],
    [157, 164, 156, 161], [161, 164, 159, 160], [161, 176, 158, 171], [169, 183, 167, 172],
    [173, 178, 172, 174], [175, 186, 175, 180], [178, 186, 176, 177], [177, 183, 177, 180],
    [182, 184, 176, 177], [177, 178, 168, 168], [168, 171, 164, 167], [169, 171, 168, 169],
    [171, 172, 168, 168], [168, 170, 167, 167], [167, 172, 167, 171], [172, 173, 168, 168],
    [170, 173, 169, 170], [170, 172, 169, 171], [171, 173, 166, 167], [168, 168, 159, 160],
    [160, 163, 160, 161], [163, 167, 162, 164], [165, 168, 163, 165], [166, 166, 161, 161],
    [161, 162, 160, 162], [162, 163, 154, 154], [149, 150, 143, 143], [152, 157, 150, 155]
];

const average = [
    164.8, 181, 181.2, 178.4, 176.6, 175.2, 156.5, 157.5, 159.4, 158.6, 158, 161.3,
    164.8, 164.8, 164.8, 164.3, 163.1, 161.9, 160.6, 159.6, 159.2, 153.2, 152.2, 151.6,
    151.3, 151.1, 152.9, 153.9, 154.5, 154.7, 161, 161.1, 160.7, 160.2, 159.7, 156.3,
    156.1, 155.3, 154.7, 154.4, 158.5, 158.5, 157.4, 157, 157.9, 160.8, 166.5, 170.2,
    171.5, 173.1, 179.7, 179.8, 179.7, 177.4, 175.6, 169.3, 169.2, 168.9, 169, 169.4,
    170.6, 170.5, 169.4, 167.4, 166.7, 164.2, 164.8, 164.4, 163.6, 161.9, 147.7, 149.8
];
const falling = [3, 4, 5, 10, 18, 19, 20, 24, 33, 34, 38, 42, 43, 54, 64, 68];
const neutral = [13, 48, 49, 71];

const ema50 = [[49, 159.2], [52, 161.3], [55, 162], [59, 163.1], [62, 163.7], [66, 163.5], [68, 163.2], [71, 162]];

const dates = [
    [0, '21'], [6, 'Ara'], [10, '5'], [14, '11'], [18, '17'], [22, '23'], [29, '2026'], [33, '8'],
    [37, '14'], [41, '20'], [45, '26'], [50, 'Şub'], [54, '6'], [58, '12'], [62, '18'], [66, '24'],
    [70, 'Mar'], [74, '6'], [78, '12'], [82, '18'], [86, '25'], [91, 'Nis'], [95, '7'], [99, '13']
];

const plot = document.getElementById('plot');

function format(p) {
    return (p / 100).toFixed(2).replace('.', ',');
}

function draw() {
    const w = plot.clientWidth;
    const h = plot.clientHeight;
    const x = i => 52 + i * (w - 94) / 100;
    const y = p => 71 + (200 - p) * (h - 114) / 80;
    let out = '';

    for (let i = 1; i < average.length; i++) {
        const color = falling.includes(i) ? '#3257dc' : neutral.includes(i) ? '#d0d0d0' : '#d42a4c';
        out += `<line x1="${x(i - 1)}" y1="${y(average[i - 1])}" x2="${x(i)}" y2="${y(average[i])}" stroke="${color}" stroke-width="1.5"/>`;
    }
    out += `<polyline points="${ema50.map(([i, p]) => x(i) + ',' + y(p)).join(' ')}" fill="none" stroke="#6b3b12"/>`;

    candles.forEach(([o, hi, lo, c], i) => {
        const up = c >= o;
        const top = y(Math.max(o, c));
        const size = y(Math.min(o, c)) - top;
        out += `<rect x="${x(i) - 0.5}" y="${y(hi)}" width="1" height="${y(lo) - y(hi)}" fill="${up ? '#262e80' : '#a8a8a8'}"/>`;
        if (size < 1) {
            out += `<rect x="${x(i) - 4.5}" y="${top - 0.5}" width="9" height="1" fill="${up ? '#2d3380' : '#888'}"/>`;
        } else {
            out += `<rect x="${x(i) - 4.5}" y="${top}" width="9" height="${size}" fill="${up ? '#1d43cc' : '#828282'}"/>`;
        }
    });

    for (let p = 210; p >= 120; p -= 5) {
        if (p !== 150) out += `<text x="${w - 13}" y="${y(p) + 2}" text-anchor="end">${format(p)}</text>`;
    }
    dates.forEach(([i, name]) => {
        out += `<text x="${x(i)}" y="${h - 6}" text-anchor="middle"${name === '2026' ? ' class="strong"' : ''}>${name}</text>`;
    });

    out += `<rect x="${w - 34}" y="${y(162) - 6}" width="25" height="11" fill="#f57c0a"/>
        <text class="strong" x="${w - 13}" y="${y(162) + 2}" text-anchor="end">1,62</text>
        <rect x="${w - 34}" y="${y(152) - 6}" width="29" height="21" fill="#111"/>
        <text class="strong" x="${w - 13}" y="${y(152) + 2}" text-anchor="end">1,52</text>
        <text x="${w - 9}" y="${y(152) + 11}" text-anchor="end">24:26</text>
        <rect x="${w - 34}" y="${y(152) + 15}" width="25" height="4" fill="#c8c8c8"/>
        <rect x="${x(11) - 6}" y="${h - 32}" width="12" height="12" rx="1" fill="none" stroke="#aaa"/>
        <text x="${x(11)}" y="${h - 23}" text-anchor="middle">E</text>`;
    plot.innerHTML = out;
}

draw();
window.addEventListener('resize', draw);
```
